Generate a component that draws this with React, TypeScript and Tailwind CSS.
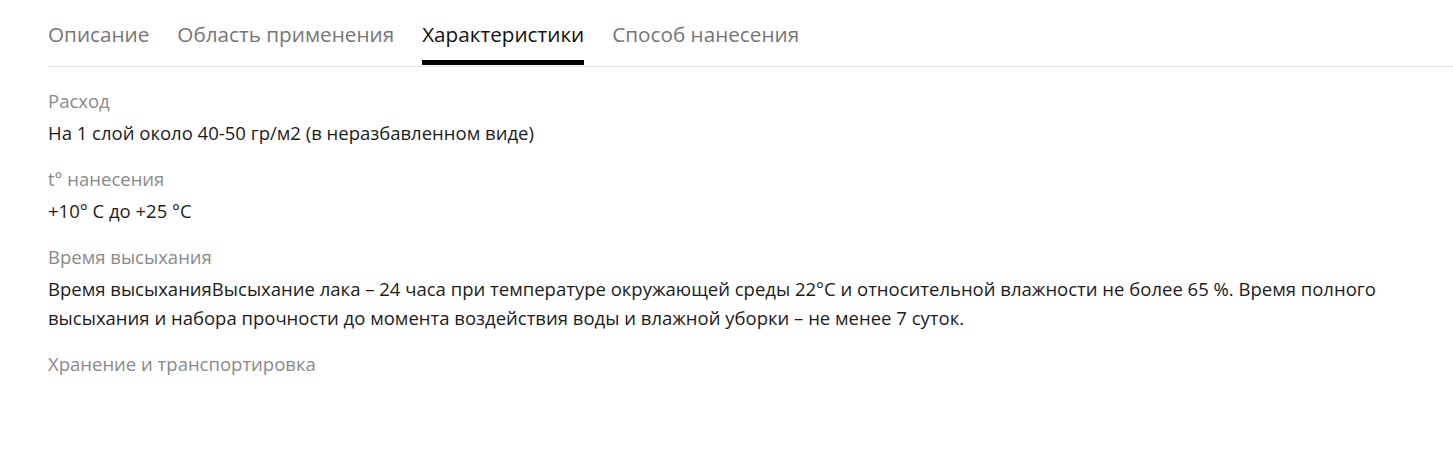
const tabs = ['Описание', 'Область применения', 'Характеристики', 'Способ нанесения'];

const specs = [
  { label: 'Расход', value: 'На 1 слой около 40-50 гр/м2 (в неразбавленном виде)' },
  { label: 't° нанесения', value: '+10° С до +25 °С' },
  {
    label: 'Время высыхания',
    value:
      'Время высыханияВысыхание лака – 24 часа при температуре окружающей среды 22°С и относительной влажности не более 65 %. Время полного высыхания и набора прочности до момента воздействия воды и влажной уборки – не менее 7 суток.',
  },
  { label: 'Хранение и транспортировка', value: '' },
];

const App = () => {
  const active = 'Характеристики';

  return (
    <div className="min-h-[475px] bg-white pl-12 font-['Open_Sans',sans-serif]">
      {/* Tabs */}
      <div className="flex gap-7 border-b border-[#e2e2e2] pt-5 pb-px">
        {tabs.map((tab) => (
          <div
            key={tab}
            className={
              tab === active
                ? 'border-b-[5px] border-black pb-3 text-[20.7px] leading-7 text-[#111]'
                : 'border-b-[5px] border-transparent pb-3 text-[20.7px] leading-7 text-[#767676]'
            }
          >
            {tab}
          </div>
        ))}
      </div>

      {/* Specs */}
      <div className="pt-[19px] pr-[70px]">
        {specs.map((item) => (
          <div key={item.label} className="mb-[17px]">
            <div className="text-[18.5px] leading-[29px] text-[#8a8a8a]">{item.label}</div>
            {item.value && (
              <div className="mt-[3px] text-[18.5px] leading-[29px] text-[#1c1c1c]">{item.value}</div>
            )}
          </div>
        ))}
      </div>
    </div>
  );
};

export default App;
